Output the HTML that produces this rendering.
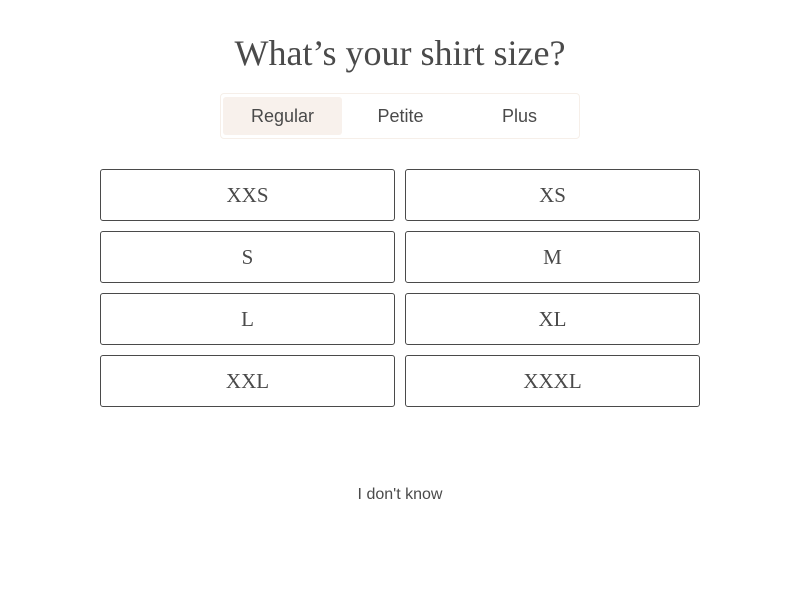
<!DOCTYPE html>
<html><head><style>
body{margin:0;width:800px;height:600px;background:#fff;font-family:"Liberation Sans",sans-serif;color:#4a4a4a;position:relative}
h1{position:absolute;top:30px;left:0;width:800px;text-align:center;margin:0;font-family:"Liberation Serif",serif;font-weight:normal;font-size:36px;line-height:46px;color:#4a4a4a}
.tabs{position:absolute;left:220px;top:93px;width:360px;height:46px;border:1px solid #f6efe9;border-radius:4px;box-sizing:border-box}
.tab{position:absolute;top:3px;height:38px;width:119px;line-height:38px;text-align:center;font-size:18px;border-radius:3px}
.b{position:absolute;width:295px;height:52px;border:1px solid #4a4a4a;border-radius:3px;box-sizing:border-box;text-align:center;line-height:50px;font-family:"Liberation Serif",serif;font-size:21px}
.idk{position:absolute;top:486px;left:0;width:800px;text-align:center;font-size:16px}
</style></head><body>
<h1>What’s your shirt size?</h1>
<div class="tabs">
<div class="tab" style="left:2px;background:#f8f1ec">Regular</div>
<div class="tab" style="left:120px">Petite</div>
<div class="tab" style="left:239px">Plus</div>
</div>
<div class="b" style="left:100px;top:169px">XXS</div>
<div class="b" style="left:405px;top:169px">XS</div>
<div class="b" style="left:100px;top:231px">S</div>
<div class="b" style="left:405px;top:231px">M</div>
<div class="b" style="left:100px;top:293px">L</div>
<div class="b" style="left:405px;top:293px">XL</div>
<div class="b" style="left:100px;top:355px">XXL</div>
<div class="b" style="left:405px;top:355px">XXXL</div>
<div class="idk">I don't know</div>
</body></html>
